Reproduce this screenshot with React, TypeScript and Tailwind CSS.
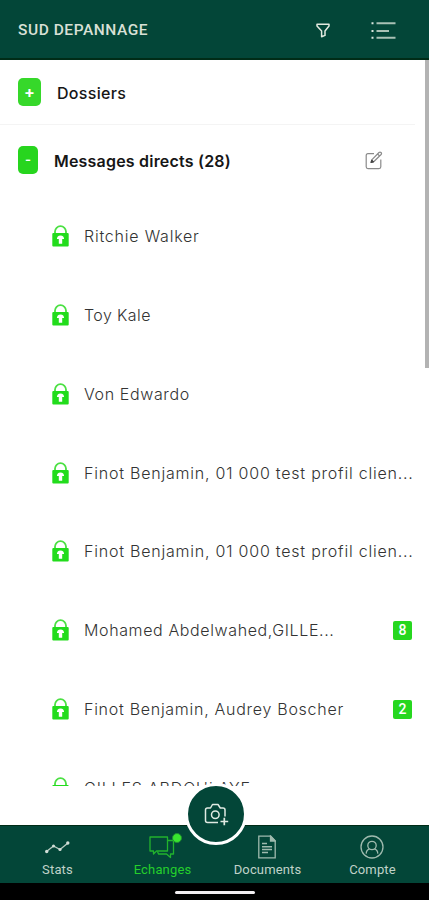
import clsx from 'clsx'
import type { ReactNode } from 'react'

type Conversation = {
  name: string
  unread?: number
  tracking: string
}

const CONVERSATIONS: Conversation[] = [
  { name: 'Ritchie Walker', tracking: 'tracking-[0.78px]' },
  { name: 'Toy Kale', tracking: 'tracking-[0.4px]' },
  { name: 'Von Edwardo', tracking: 'tracking-[0.62px]' },
  { name: 'Finot Benjamin, 01 000 test profil clien...', tracking: 'tracking-[0.78px]' },
  { name: 'Finot Benjamin, 01 000 test profil clien...', tracking: 'tracking-[0.78px]' },
  { name: 'Mohamed Abdelwahed,GILLE...', unread: 8, tracking: 'tracking-[0.62px]' },
  { name: 'Finot Benjamin, Audrey Boscher', unread: 2, tracking: 'tracking-[0.72px]' },
  { name: 'GILLES ABDOULAYE', tracking: 'tracking-[0.82px]' },
]

function FilterIcon() {
  return (
    <svg width="14" height="15" viewBox="0 0 14 15" fill="none" stroke="#e3e9df" strokeWidth="1.5" strokeLinejoin="round">
      <path d="M1 1.2h12v1.8L9 8v4.4L5.6 13.8V8L1 3z" />
    </svg>
  )
}

function MenuIcon() {
  return (
    <svg width="25" height="19" viewBox="0 0 25 19" fill="none" stroke="#a9c1b5" strokeWidth="2">
      <path d="M5.5 2.3h19M5.5 10h12.5M5.5 16.7h19" />
      <path d="M.5 2.3h2M.5 10h2M.5 16.7h2" stroke="#dce7df" />
    </svg>
  )
}

function EditIcon() {
  return (
    <svg width="18" height="19" viewBox="0 0 18 19" fill="none" stroke="#8a8a8a" strokeWidth="1.2" strokeLinejoin="round">
      <path d="M9 2.7H3Q1.2 2.7 1.2 4.5v11.3q0 1.8 1.8 1.8h11q1.8 0 1.8-1.8V8.5" />
      <path d="M6.4 10.8l.6-2.2L14 1.5q1-.9 2 0 1 1 .1 2L9.2 10.3zM12.6 3l2.1 2.1" />
      <path d="M6 11.5l.8-2.3 1.7 1.7z" fill="#444" stroke="#444" />
    </svg>
  )
}

function LockIcon() {
  return (
    <svg width="17" height="22" viewBox="0 0 17 22" fill="none" className="shrink-0">
      <path d="M3 9V6.6a5.5 5.4 0 0 1 11 0V9" stroke="#4be043" strokeWidth="1.8" />
      <rect x=".3" y="8" width="16.4" height="13.5" rx="1" fill="#22dc1c" />
      <path d="M8.5 10.5q-3.6.3-3.6 3.6h1.9v4.6h3.4v-4.6h1.9q0-3.3-3.6-3.6z" fill="#fff" />
    </svg>
  )
}

function CameraIcon() {
  return (
    <svg width="27" height="25" viewBox="0 0 27 25" fill="none" stroke="#e0eae2" strokeWidth="1.5" strokeLinejoin="round">
      <path d="M15 20.5H4.5q-2 0-2-2V8q0-2 2-2h3L9.5 2.5h5.5L17.3 6H20q2 0 2 2v6.5" />
      <circle cx="12.3" cy="12.8" r="3.8" />
      <path d="M21.3 15.8v7.5M17.5 19.5h7.7" strokeWidth="1.7" />
    </svg>
  )
}

function StatsIcon() {
  return (
    <svg width="26" height="14" viewBox="0 0 26 14" fill="none" stroke="#b8ccc2" strokeWidth="1.4">
      <path d="M2.5 11.5l7-5.5 6.5 3.5L24 3" />
      <g fill="#d2ded7" stroke="none">
        <circle cx="2.7" cy="11.5" r="1.7" />
        <circle cx="9.5" cy="6" r="1.5" />
        <circle cx="16" cy="9.5" r="1.6" />
        <circle cx="23.8" cy="3" r="1.7" />
      </g>
    </svg>
  )
}

function ChatIcon() {
  return (
    <svg width="26" height="23" viewBox="0 0 26 23" fill="none" stroke="#22b32d" strokeWidth="1.3" strokeLinejoin="round">
      <path d="M1 1h17.5v14H7.5l-3 3v-3H1z" />
      <path d="M18.5 4.5H24.5V18H21.5v3.5L17.5 18H9.5L8.5 15.5" />
    </svg>
  )
}

function DocumentIcon() {
  return (
    <svg width="18" height="24" viewBox="0 0 18 24" fill="none" stroke="#9fbaae" strokeWidth="1.3">
      <path d="M.8 1.2h12l4.4 4.5v17.1H.8z" />
      <path d="M12.5 1.2v4.8h4.7z" fill="#9fbaae" />
      <path d="M4 8.5h5M4 11.7h10M4 14.5h10M4 17.5h6" strokeWidth="1.6" />
    </svg>
  )
}

function AccountIcon() {
  return (
    <svg width="24" height="24" viewBox="0 0 24 24" fill="none" stroke="#9fbaae" strokeWidth="1.3">
      <circle cx="12" cy="12" r="11" />
      <circle cx="12" cy="10.5" r="4.2" />
      <path d="M6.2 18.6q.2-3.8 3.5-4.7M17.8 18.6q-.2-3.8-3.5-4.7" />
    </svg>
  )
}

function NavItem({ label, icon, active, dot }: { label: string; icon: ReactNode; active?: boolean; dot?: boolean }) {
  return (
    <a className="flex w-[105px] flex-col items-center pt-2">
      <span className="relative mr-px flex h-[26px] items-center">
        {icon}
        {dot && <span className="absolute -top-px left-[23px] size-[10px] rounded-full border border-[#1f8f30] bg-[#39e42f]" />}
      </span>
      <span
        className={clsx(
          'mt-[2px] font-[Roboto,sans-serif] text-[13px] leading-[16px] tracking-[0.15px]',
          active ? 'text-[#25cf2b]' : 'text-[#c0d2c8]',
        )}
      >
        {label}
      </span>
    </a>
  )
}

export default function App() {
  return (
    <div className="relative flex h-[900px] w-[429px] flex-col overflow-hidden bg-white font-[Inter,sans-serif]">
      <header className="flex h-[60px] shrink-0 items-center border-b-2 border-[#002c17] bg-[#034638] pt-0.5 pr-[33px] pl-[18px]">
        <h1 className="flex-1 pt-[2px] font-[Roboto,sans-serif] text-[15.5px] font-medium tracking-[0.55px] text-[#d9e0d6]">SUD DEPANNAGE</h1>
        <FilterIcon />
        <span className="ml-[41px]">
          <MenuIcon />
        </span>
      </header>

      {/* Scrollable list */}
      <main className="relative h-[726px] shrink-0 overflow-hidden">
        <div className="mr-[14px] flex h-[65px] items-center border-b border-[#f4f4f4] pl-[18px]">
          <button className="flex h-7 w-[23px] items-center justify-center rounded-[5px] bg-[#36d82a] text-[16px] font-bold text-white">+</button>
          <h2 className="ml-4 pt-px text-[16px] font-medium tracking-[0.3px] text-[#161616]">Dossiers</h2>
        </div>
        <div className="flex h-[71px] items-center pr-[46px] pl-[18px]">
          <button className="-mt-px flex h-7 w-5 items-center justify-center rounded-[5px] bg-[#27d51e] text-[13px] font-semibold text-white">-</button>
          <h2 className="ml-4 flex-1 text-[16px] font-semibold tracking-[0.2px] text-[#161616]">Messages directs (28)</h2>
          <EditIcon />
        </div>
        <ul className="pt-[0.6px]">
          {CONVERSATIONS.map((c, i) => (
            <li key={i} className="flex h-[78.85px] items-center pr-[17px] pl-[52px]">
              <LockIcon />
              <span className={clsx('ml-[15px] flex-1 text-[16px] font-light whitespace-nowrap text-[#333]', c.tracking)}>{c.name}</span>
              {c.unread && (
                <span className="flex size-[19px] items-center justify-center rounded-[2px] bg-[#26d71f] font-[Roboto,sans-serif] text-[14px] font-medium text-white">
                  {c.unread}
                </span>
              )}
            </li>
          ))}
        </ul>
        <div className="absolute top-0 right-0 h-[308px] w-1 bg-[#b3b3b3]" />
      </main>

      <div className="flex-1" />

      {/* Bottom navigation */}
      <nav className="flex h-[58px] shrink-0 justify-center border-t border-[#002c17] bg-[#034638] pl-px">
        <NavItem label="Stats" icon={<StatsIcon />} />
        <NavItem label="Echanges" icon={<ChatIcon />} active dot />
        <NavItem label="Documents" icon={<DocumentIcon />} />
        <NavItem label="Compte" icon={<AccountIcon />} />
      </nav>
      <div className="flex h-[17px] shrink-0 items-center justify-center bg-black">
        <span className="mt-[2px] h-[3px] w-20 rounded-full bg-[#f2eff2]" />
      </div>

      <button className="absolute top-[783px] left-[185px] flex size-[62px] items-center justify-center rounded-full border-[3px] border-white bg-[#034638]">
        <CameraIcon />
      </button>
    </div>
  )
}
